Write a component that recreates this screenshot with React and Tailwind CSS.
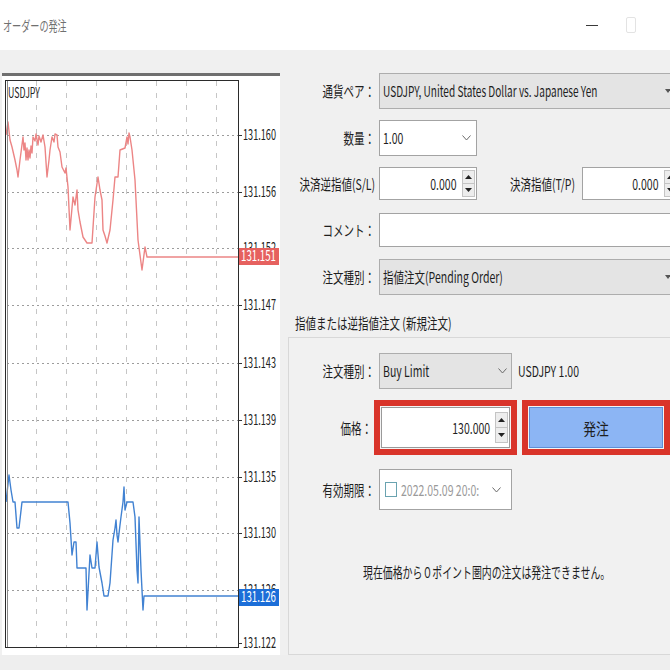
import React from "react";

function Sc({ children, o = "l", sc = "scale-x-[0.7]", className = "" }) {
  const origin = o === "r" ? "origin-right" : o === "c" ? "origin-center" : "origin-left";
  return (
    <span className={`inline-block shrink-0 whitespace-nowrap leading-[20px] ${sc} ${origin} ${className}`}>
      {children}
    </span>
  );
}

function Chevron({ className = "" }) {
  return (
    <svg width="9" height="6" viewBox="0 0 9 6" className={className}>
      <path d="M0.5 0.5 L4.5 5 L8.5 0.5" fill="none" stroke="#6b6b6b" strokeWidth="1" />
    </svg>
  );
}

function Spinner({ h = "h-[27px]" }) {
  return (
    <div className={`flex flex-col w-[13px] ${h} border border-[#c4c4c4] bg-[#ededed] shrink-0`}>
      <div className="flex-1 flex items-center justify-center border-b border-[#c4c4c4]">
        <svg width="7" height="4" viewBox="0 0 7 4">
          <path d="M0 4 L3.5 0 L7 4Z" fill="#222" />
        </svg>
      </div>
      <div className="flex-1 flex items-center justify-center">
        <svg width="7" height="4" viewBox="0 0 7 4">
          <path d="M0 0 L3.5 4 L7 0Z" fill="#222" />
        </svg>
      </div>
    </div>
  );
}

const red = [
  [6, 135], [8, 122], [10, 140], [12, 147], [15, 160], [17, 170], [18, 177], [20, 160], [23, 137],
  [24, 150], [25, 143], [26, 160], [27, 148], [28, 160], [29, 150], [30, 158], [31, 146], [32, 153],
  [33, 137], [35, 141], [36, 134], [38, 145], [39, 136], [41, 142], [43, 135], [45, 147], [47, 177],
  [49, 160], [50, 150], [52, 137], [54, 142], [55, 134], [57, 135], [58, 147], [60, 152], [62, 167],
  [65, 173], [66, 168], [68, 187], [70, 230], [73, 197], [75, 205], [77, 190], [78, 210], [80, 222],
  [83, 237], [87, 243], [92, 243], [95, 197], [98, 177], [100, 190], [102, 200], [103, 230], [105, 236],
  [107, 243], [110, 230], [113, 200], [115, 177], [118, 177], [120, 150], [125, 148], [127, 137],
  [128, 144], [129, 133], [130, 137], [132, 150], [135, 180], [138, 240], [142, 270], [145, 247],
  [147, 257], [238, 257],
];

const blue = [
  [6, 502], [9, 475], [11, 490], [13, 502], [15, 502], [17, 528], [19, 528], [22, 502], [68, 502],
  [70, 523], [72, 555], [74, 542], [76, 542], [77, 568], [86, 568], [87, 610], [90, 555], [92, 568],
  [95, 568], [97, 542], [99, 567], [102, 583], [104, 596], [108, 596], [110, 583], [113, 540],
  [115, 528], [116, 520], [117, 535], [118, 542], [120, 525], [121, 517], [123, 502], [124, 487],
  [125, 510], [127, 502], [133, 502], [135, 517], [137, 570], [138, 583], [139, 517], [141, 570],
  [143, 610], [144, 596], [238, 596],
];

const labels = [
  [135, "131.160"], [192, "131.156"], [248, "131.152"], [305, "131.147"], [363, "131.143"],
  [420, "131.139"], [477, "131.135"], [533, "131.130"], [590, "131.126"], [643, "131.122"],
];

const FONT = "'Noto Sans CJK JP', 'Liberation Sans', sans-serif";

function Chart() {
  const pts = (a) => a.map(([x, y]) => `${x},${y}`).join(" ");
  return (
    <svg width="278" height="579" viewBox="2 76 278 579" className="block">
      {[36.5, 66.5, 96.5, 126.5, 156.5, 186.5, 216.5].map((x) => (
        <line key={x} x1={x} y1="81" x2={x} y2="647" stroke="#c6c6c6" strokeWidth="1" strokeDasharray="5 7" />
      ))}
      {labels.slice(0, 9).map(([y]) => (
        <line key={y} x1="7" y1={y + 0.5} x2="238" y2={y + 0.5} stroke="#9c9c9c" strokeWidth="1" strokeDasharray="2 3" />
      ))}
      <polyline points={pts(red)} fill="none" stroke="#ec8585" strokeWidth="1.4" strokeLinejoin="round" />
      <polyline points={pts(blue)} fill="none" stroke="#4182d2" strokeWidth="1.4" strokeLinejoin="round" />
      <rect x="5.5" y="80.5" width="233" height="567" fill="none" stroke="#2b2b2b" strokeWidth="1" />
      <line x1="7.5" y1="81" x2="7.5" y2="647" stroke="#8a8a8a" strokeWidth="1" />
      <text x="8" y="98" fontSize="14" textLength="32" lengthAdjust="spacingAndGlyphs" fill="#222" fontFamily={FONT}>
        USDJPY
      </text>
      {labels.map(([y, t]) => (
        <g key={t}>
          <line x1="238" y1={y + 0.5} x2="242" y2={y + 0.5} stroke="#333" strokeWidth="1" />
          <text x="243" y={y + 5} fontSize="15" textLength="33" lengthAdjust="spacingAndGlyphs" fill="#222" fontFamily={FONT}>
            {t}
          </text>
        </g>
      ))}
      <rect x="239" y="248" width="40" height="17" fill="#e6615f" />
      <text x="241" y="261" fontSize="15" textLength="35" lengthAdjust="spacingAndGlyphs" fill="#fff" fontFamily={FONT}>
        131.151
      </text>
      <rect x="239" y="589" width="40" height="17" fill="#1c6ed8" />
      <text x="241" y="602" fontSize="15" textLength="35" lengthAdjust="spacingAndGlyphs" fill="#fff" fontFamily={FONT}>
        131.126
      </text>
    </svg>
  );
}

export default function App() {
  return (
    <div className="w-[670px] h-[670px] overflow-hidden bg-[#f0f0f0] flex flex-col text-[15px] text-[#1e1e1e] font-['Noto_Sans_CJK_JP','Liberation_Sans',sans-serif]">
      {/* title bar */}
      <div className="h-[50px] shrink-0 bg-white flex items-center">
        <Sc sc="scale-x-[0.65]" className="ml-[3px] text-[14px] text-[#707070]">オーダーの発注</Sc>
        <div className="ml-auto flex items-center">
          <div className="w-[12px] h-[1px] bg-[#3a3a3a]" />
          <div className="ml-[28px] mr-[34px] w-[10px] h-[16px] border border-[#e3e3e3] rounded-[2px]" />
        </div>
      </div>

      {/* body */}
      <div className="flex h-[605px] shrink-0">
        <div className="w-[283px] shrink-0 pl-[2px] pt-[23px]">
          <div className="w-[278px] h-[582px] bg-white border-t-[3px] border-[#6f6f6f]">
            <Chart />
          </div>
        </div>

        <div className="flex-1 min-w-0 flex flex-col pt-[23px]">
          {/* 通貨ペア */}
          <div className="flex items-center h-[36px] shrink-0">
            <div className="w-[92px] flex justify-end shrink-0"><Sc o="r">通貨ペア：</Sc></div>
            <div className="ml-[4px] w-[296px] h-[36px] shrink-0 bg-[#e4e4e4] border border-[#adadad] flex items-center pl-[3px] pr-[3px]">
              <div className="flex-1 min-w-0 overflow-hidden flex"><Sc sc="scale-x-[0.67]">USDJPY, United States Dollar vs. Japanese Yen</Sc></div>
              <svg width="6" height="4" viewBox="0 0 6 4" className="shrink-0"><path d="M0 0 L3 4 L6 0Z" fill="#555" /></svg>
            </div>
          </div>

          {/* 数量 */}
          <div className="flex items-center h-[36px] mt-[11px] shrink-0">
            <div className="w-[92px] flex justify-end shrink-0"><Sc o="r">数量：</Sc></div>
            <div className="ml-[4px] w-[98px] h-[36px] shrink-0 bg-white border border-[#a3a3a3] flex items-center justify-between pl-[3px] pr-[5px]">
              <Sc>1.00</Sc>
              <Chevron />
            </div>
          </div>

          {/* S/L T/P */}
          <div className="flex items-center h-[33px] mt-[11px] shrink-0">
            <div className="w-[92px] flex justify-end shrink-0"><Sc o="r">決済逆指値(S/L)</Sc></div>
            <div className="ml-[4px] w-[98px] h-[33px] shrink-0 bg-white border border-[#a3a3a3] flex items-center">
              <div className="flex-1 flex justify-end pr-[6px]"><Sc o="r">0.000</Sc></div>
              <div className="mr-[1px]"><Spinner /></div>
            </div>
            <div className="w-[98px] flex justify-end shrink-0"><Sc o="r">決済指値(T/P)</Sc></div>
            <div className="ml-[7px] w-[97px] h-[33px] shrink-0 bg-white border border-[#a3a3a3] flex items-center">
              <div className="flex-1 flex justify-end pr-[6px]"><Sc o="r">0.000</Sc></div>
              <div className="mr-[1px]"><Spinner /></div>
            </div>
          </div>

          {/* コメント */}
          <div className="flex items-center h-[34px] mt-[13px] shrink-0">
            <div className="w-[92px] flex justify-end shrink-0"><Sc o="r">コメント：</Sc></div>
            <div className="ml-[4px] w-[296px] h-[34px] shrink-0 bg-white border border-[#a3a3a3]" />
          </div>

          {/* 注文種別 */}
          <div className="flex items-center h-[36px] mt-[12px] shrink-0">
            <div className="w-[92px] flex justify-end shrink-0"><Sc o="r">注文種別：</Sc></div>
            <div className="ml-[4px] w-[296px] h-[36px] shrink-0 bg-[#e4e4e4] border border-[#adadad] flex items-center pl-[3px] pr-[3px]">
              <div className="flex-1 min-w-0 overflow-hidden flex"><Sc>指値注文(Pending Order)</Sc></div>
              <svg width="6" height="4" viewBox="0 0 6 4" className="shrink-0"><path d="M0 0 L3 4 L6 0Z" fill="#555" /></svg>
            </div>
          </div>

          {/* section header */}
          <div className="h-[20px] mt-[18px] pl-[12px] flex items-center shrink-0">
            <Sc>指値または逆指値注文 (新規注文)</Sc>
          </div>

          {/* group */}
          <div className="flex-1 mt-[4px] ml-[5px] border-l border-t border-b border-[#d8d8d8] bg-[#f1f1f1] pt-[15px] flex flex-col">
            {/* 注文種別 */}
            <div className="flex items-center h-[36px] shrink-0">
              <div className="w-[86px] flex justify-end shrink-0"><Sc o="r">注文種別：</Sc></div>
              <div className="ml-[4px] w-[133px] h-[36px] shrink-0 bg-[#e4e4e4] border border-[#adadad] flex items-center pl-[3px] pr-[4px]">
                <div className="flex-1 min-w-0 overflow-hidden flex"><Sc>Buy Limit</Sc></div>
                <Chevron className="shrink-0" />
              </div>
              <Sc className="ml-[6px]">USDJPY 1.00</Sc>
            </div>

            {/* 価格 */}
            <div className="flex items-center h-[55px] mt-[11px] shrink-0">
              <div className="w-[85px] flex justify-end shrink-0 pr-[2px]"><Sc o="r">価格：</Sc></div>
              <div className="w-[143px] h-[55px] shrink-0 border-[6px] border-[#d9342a] p-[1px] bg-[#f4f4f4]">
                <div className="w-full h-full bg-white border border-[#9a9a9a] flex items-center">
                  <div className="flex-1 flex justify-end pr-[5px]"><Sc o="r">130.000</Sc></div>
                  <div className="mr-[1px]"><Spinner h="h-[31px]" /></div>
                </div>
              </div>
              <div className="ml-[5px] w-[148px] h-[55px] shrink-0 border-[6px] border-[#d9342a] p-[1px] bg-[#f4f4f4]">
                <div className="w-full h-full bg-[#8cb5f4] border border-[#5d8fd8] flex items-center justify-center">
                  <Sc o="c" sc="scale-x-[0.8]" className="text-[16px]">発注</Sc>
                </div>
              </div>
            </div>

            {/* 有効期限 */}
            <div className="flex items-center h-[41px] mt-[14px] shrink-0">
              <div className="w-[86px] flex justify-end shrink-0"><Sc o="r">有効期限：</Sc></div>
              <div className="ml-[4px] w-[133px] h-[41px] shrink-0 bg-white border border-[#a3a3a3] flex items-center pl-[5px] pr-[10px]">
                <div className="w-[12px] h-[15px] border border-[#6aa3b0] bg-white shrink-0" />
                <div className="ml-[4px] w-[82px] shrink-0 overflow-hidden flex">
                  <Sc className="text-[#9a9a9a]">2022.05.09 20:0:</Sc>
                </div>
                <div className="ml-auto shrink-0"><Chevron /></div>
              </div>
            </div>

            {/* message */}
            <div className="h-[20px] mt-[52px] pl-[74px] flex items-center shrink-0">
              <Sc sc="scale-x-[0.66]">現在価格から０ポイント圏内の注文は発注できません。</Sc>
            </div>
          </div>
        </div>
      </div>

      {/* bottom strip */}
      <div className="flex-1 bg-[#eeeeee]" />
    </div>
  );
}
